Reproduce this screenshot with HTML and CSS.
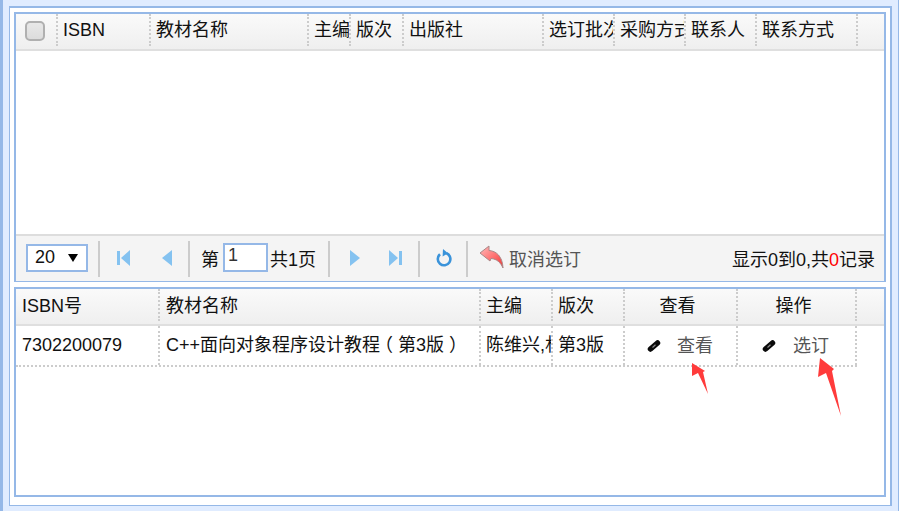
FILE: index.html
```html
<!DOCTYPE html>
<html lang="zh-CN">
<head>
<meta charset="utf-8">
<title>教材选订</title>
<link rel="stylesheet" href="styles.css">
</head>
<body>
<div class="frame">
  <section class="panel panel-top">
    <div class="head head-a">
      <div class="cell cell-check"><span class="checkbox"></span></div>
      <div class="cell">ISBN</div>
      <div class="cell">教材名称</div>
      <div class="cell">主编</div>
      <div class="cell">版次</div>
      <div class="cell">出版社</div>
      <div class="cell">选订批次</div>
      <div class="cell">采购方式</div>
      <div class="cell">联系人</div>
      <div class="cell">联系方式</div>
    </div>
    <div class="body-empty"></div>
    <div class="pager">
      <div class="page-size"><span>20</span><svg class="caret" viewBox="0 0 10 8"><path d="M0 0H10L5 8Z"/></svg></div>
      <span class="sep sep-first"></span>
      <div class="nav nav-a">
        <svg class="ico" viewBox="0 0 14 16"><path class="blue" d="M0 1H3V15H0ZM13 0V16L4 8Z"/></svg>
        <svg class="ico" viewBox="0 0 14 16"><path class="blue" d="M12 0V16L2 8Z"/></svg>
      </div>
      <span class="sep"></span>
      <div class="page-no"><span>第</span><input class="page-input" value="1"><span>共1页</span></div>
      <span class="sep"></span>
      <div class="nav nav-b">
        <svg class="ico" viewBox="0 0 14 16"><path class="blue" d="M2 0V16L12 8Z"/></svg>
        <svg class="ico" viewBox="0 0 14 16"><path class="blue" d="M1 0V16L10 8ZM11 1H14V15H11Z"/></svg>
      </div>
      <span class="sep"></span>
      <svg class="reload" viewBox="0 0 18 18"><path class="ring" d="M5 5.200A6.300 6.300 0 1 0 11.500 4.200"/><path class="ring-tip" d="M8 0L13 4.200L7.600 7.600Z"/></svg>
      <span class="sep"></span>
      <div class="undo">
        <svg class="undo-ico" viewBox="0 0 25 24">
          <defs><linearGradient id="undoFill" x1="0" y1="0" x2="1" y2="1"><stop offset="0" stop-color="#fbb"/><stop offset=".5" stop-color="#f77"/><stop offset="1" stop-color="#e33"/></linearGradient></defs>
          <path class="undo-shape" d="M1 8L10 1V5.500C17 6 23.500 11 24 23C21.500 17.500 18 14 12 13.500L11 16Z"/>
        </svg>
        <span>取消选订</span>
      </div>
      <div class="summary">显示0到0,共<em>0</em>记录</div>
    </div>
  </section>
  <section class="panel panel-bottom">
    <div class="head head-b">
      <div class="cell">ISBN号</div>
      <div class="cell">教材名称</div>
      <div class="cell cell-tight">主编</div>
      <div class="cell cell-tight">版次</div>
      <div class="cell cell-center cell-op">查看</div>
      <div class="cell cell-center cell-op">操作</div>
    </div>
    <div class="row">
      <div class="cell">7302200079</div>
      <div class="cell">C++面向对象程序设计教程<span class="paren-open">（</span>第3版<span class="paren-close">）</span></div>
      <div class="cell cell-tight">陈维兴,林小茶</div>
      <div class="cell cell-tight">第3版</div>
      <div class="cell cell-link"><svg class="link-ico" viewBox="0 0 14 12"><path class="pill" d="M3.500 9L10.500 3"/><path class="slit" d="M5.500 7.500L8.500 4.800"/></svg><a class="link link-view">查看</a></div>
      <div class="cell cell-link cell-link-pick"><svg class="link-ico" viewBox="0 0 14 12"><path class="pill" d="M3.500 9L10.500 3"/><path class="slit" d="M5.500 7.500L8.500 4.800"/></svg><a class="link link-pick">选订</a></div>
    </div>
  </section>
</div>
<svg class="marks" viewBox="0 0 899 511">
  <path d="M692 363L692 376L698 373L708 394L703 372L705 371Z"/>
  <path d="M820 358L818 377L826 373L841 416L832 371L834 369Z"/>
</svg>
</body>
</html>
```
FILE: styles.css
```css
* { box-sizing: border-box; }
html, body { margin: 0; height: 511px; overflow: hidden; }
body {
  position: relative;
  background: #e0ecff;
  border-left: 3px solid #95b8e7;
  border-right: 1px solid #95b8e7;
  padding: 6px 6px 5px 6px;
  font: 18px "Liberation Sans", "Noto Sans CJK SC", sans-serif;
  color: #111;
}
.frame {
  height: 500px;
  background: #fff;
  border-style: solid;
  border-color: #95b8e7;
  border-width: 2px 2px 1px 1px;
  padding: 4px 4px 8px 4px;
  display: flex;
  flex-direction: column;
  gap: 5px;
}
.panel {
  border-style: solid;
  border-color: #95b8e7;
  display: flex;
  flex-direction: column;
  overflow: hidden;
}
.panel-top { height: 270px; border-width: 2px 2px 1px 2px; }
.panel-bottom { height: 210px; border-width: 2px; }

.head, .row { display: grid; }
.head {
  background: linear-gradient(#fafafa, #efefef);
  border-bottom: 2px solid #dfdfdf;
}
.head-a {
  height: 37px;
  grid-template-columns: 42px 93px 158px 42px 53px 140px 71px 71px 71px 101px;
}
.head-b, .row { grid-template-columns: 144px 321px 72px 72px 113px 119px; }
.head-b { height: 37px; }
.row { height: 41px; width: 841px; border-bottom: 2px dotted #ccc; }
.cell {
  padding-left: 6px;
  border-right: 2px dotted #ccc;
  white-space: nowrap;
  overflow: hidden;
}
.head-a .cell { padding-left: 5px; }
.head .cell { margin-bottom: 3px; line-height: 32px; }
.head-b .cell { line-height: 34px; }
.row .cell { line-height: 38px; padding-left: 6px; }
.head .cell-tight, .row .cell-tight { padding-left: 5px; }
.paren-open { margin: 0 5px 0 -5px; }
.paren-close { margin-left: 5px; }
.head-a .cell-check { padding: 7px 0 0 9px; }
.checkbox {
  display: block;
  width: 20px;
  height: 20px;
  background: linear-gradient(#e8e8e8, #dcdcdc);
  border: 2px solid #b0b0b0;
  border-radius: 5px;
}
.head .cell-center { text-align: center; padding-left: 0; }
.cell-op { padding-right: 6px; }
.row .cell-link { display: flex; align-items: center; padding-left: 22px; }
.row .cell-link-pick { padding-left: 24px; }
.link-ico { width: 14px; height: 12px; flex: none; margin-top: 1px; }
.pill { fill: none; stroke: #0a0a0a; stroke-width: 5.500; stroke-linecap: round; }
.slit { fill: none; stroke: #8a8a8a; stroke-width: 1.200; }
.link { color: #555; }
.link-view { margin-left: 16px; }
.link-pick { margin-left: 17px; }

.body-empty { flex: 1; background: #fff; }
.pager {
  height: 47px;
  flex: none;
  display: flex;
  align-items: center;
  background: #f4f4f4;
  border-top: 2px solid #ddd;
  padding: 0 9px 2px 10px;
}
.page-size {
  width: 62px;
  height: 28px;
  background: #fff;
  border: 2px solid #95b8e7;
  display: flex;
  align-items: center;
  justify-content: space-between;
  padding: 0 8px 0 7px;
}
.caret { width: 10px; height: 8px; }
.sep {
  width: 2px;
  height: 36px;
  background: #ccc;
  flex: none;
  margin-top: 2px;
}
.sep-first { margin-left: 10px; }
.nav { display: flex; }
.nav-a { width: 88px; padding-left: 17px; gap: 29px; }
.nav-b { width: 88px; padding-left: 18px; gap: 26px; }
.ico { width: 14px; height: 16px; flex: none; }
.blue { fill: #84c2f0; }
.page-no { width: 138px; padding-left: 11px; display: flex; align-items: center; }
.page-input {
  width: 45px;
  height: 29px;
  margin: 0 2px 0 4px;
  padding: 0 0 5px 3px;
  border: 2px solid #95b8e7;
  font: inherit;
  color: #333;
  background: #fff;
  outline: none;
}
.reload { width: 18px; height: 18px; margin: 0 13px 0 15px; flex: none; }
.ring { fill: none; stroke: #3a93da; stroke-width: 2.600; }
.ring-tip { fill: #3a93da; }
.undo { display: flex; align-items: center; margin-left: 11px; color: #555; gap: 5px; }
.undo-ico { width: 25px; height: 24px; margin-top: -1px; }
.undo-shape { fill: url(#undoFill); stroke: #a88; stroke-width: 1; stroke-linejoin: round; }
.summary { margin-left: auto; }
.summary em { font-style: normal; color: #f00; }

.marks { position: absolute; left: -3px; top: 0; width: 899px; height: 511px; pointer-events: none; }
.marks path { fill: #ff3b3b; }
```
